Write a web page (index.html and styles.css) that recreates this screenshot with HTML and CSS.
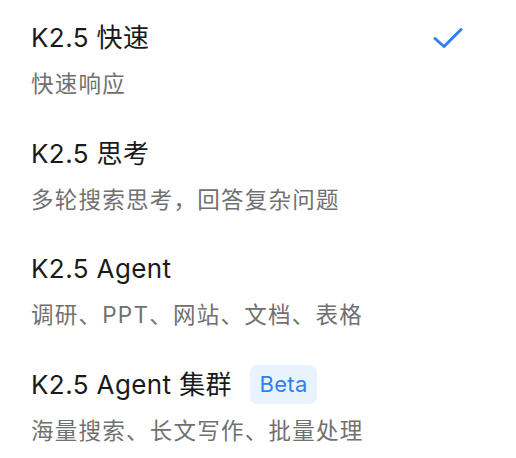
FILE: index.html
```html
<!DOCTYPE html>
<html lang="zh-CN">
<head>
<meta charset="utf-8">
<link rel="stylesheet" href="styles.css">
</head>
<body>
<ul class="menu">
  <li class="item">
    <div class="title-row">
      <span class="title">K2.5 快速</span>
      <svg class="check" width="30" height="22" viewBox="0 0 30 22" aria-hidden="true">
        <path d="M2 11.5 L11 19.5 L28 2.5" fill="none" stroke="#2f7ff2" stroke-width="3" stroke-linecap="round" stroke-linejoin="round"/>
      </svg>
    </div>
    <div class="desc">快速响应</div>
  </li>
  <li class="item">
    <div class="title-row"><span class="title">K2.5 思考</span></div>
    <div class="desc">多轮搜索思考，回答复杂问题</div>
  </li>
  <li class="item">
    <div class="title-row"><span class="title">K2.5 Agent</span></div>
    <div class="desc">调研、PPT、网站、文档、表格</div>
  </li>
  <li class="item">
    <div class="title-row"><span class="title">K2.5 Agent 集群</span><span class="badge">Beta</span></div>
    <div class="desc">海量搜索、长文写作、批量处理</div>
  </li>
</ul>
</body>
</html>
```

FILE: styles.css
```css
* { box-sizing: border-box; }
html, body {
  margin: 0;
  padding: 0;
  background: #ffffff;
}
body {
  font-family: Inter, "Noto Sans CJK SC", sans-serif;
  width: 516px;
  height: 458px;
  overflow: hidden;
}
.menu {
  list-style: none;
  margin: 0;
  padding: 20px 53px 0 31px;
  display: flex;
  flex-direction: column;
  gap: 36.5px;
}
.item {
  display: flex;
  flex-direction: column;
  gap: 13px;
}
.title-row {
  display: flex;
  align-items: center;
  height: 36px;
}
.title {
  font-size: 26px;
  letter-spacing: 0.4px;
  line-height: 36px;
  color: #1a1a1a;
  flex: 0 0 auto;
}
.check {
  margin-left: auto;
  display: block;
}
.badge {
  margin-left: 18px;
  height: 39px;
  padding: 0 9.5px;
  border-radius: 7px;
  background: #e9f3fe;
  color: #2f7ff2;
  font-size: 22px;
  letter-spacing: 0.3px;
  line-height: 39px;
  flex: 0 0 auto;
}
.desc {
  font-size: 22.5px;
  letter-spacing: 1.25px;
  line-height: 30px;
  color: #707070;
}
```
